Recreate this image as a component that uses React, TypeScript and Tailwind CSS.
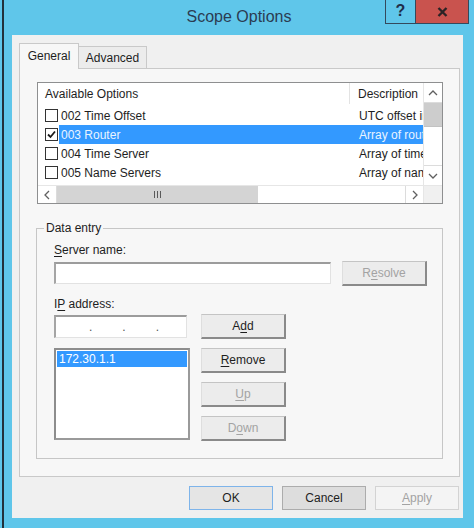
import React from "react";

const Chevron = ({ dir }: { dir: "up" | "down" | "left" | "right" }) => {
  const pts: Record<string, string> = {
    up: "1,6 5,2 9,6",
    down: "1,2 5,6 9,2",
    left: "6,1 2,5 6,9",
    right: "2,1 6,5 2,9",
  };
  const vertical = dir === "up" || dir === "down";
  return (
    <svg width={vertical ? 10 : 8} height={vertical ? 8 : 10} viewBox={vertical ? "0 0 10 8" : "0 0 8 10"}>
      <polyline points={pts[dir]} fill="none" stroke="#606060" strokeWidth="1.3" />
    </svg>
  );
};

const CheckBox = ({ checked }: { checked?: boolean }) => (
  <div className="w-[13px] h-[13px] border border-[#333333] bg-white flex items-center justify-center shrink-0">
    {checked && (
      <svg width="9" height="9" viewBox="0 0 9 9">
        <polyline points="1,4.5 3.5,7 8,1.5" fill="none" stroke="#1a1a1a" strokeWidth="1.8" />
      </svg>
    )}
  </div>
);

type Row = { code: string; desc: string; checked?: boolean; selected?: boolean };

const rows: Row[] = [
  { code: "002 Time Offset", desc: "UTC offset in seconds" },
  { code: "003 Router", desc: "Array of router addresses", checked: true, selected: true },
  { code: "004 Time Server", desc: "Array of time server addresses" },
  { code: "005 Name Servers", desc: "Array of name servers" },
];

const ClassicButton = ({
  children,
  disabled,
  className = "",
}: {
  children: React.ReactNode;
  disabled?: boolean;
  className?: string;
}) => (
  <div
    className={`w-[85px] h-[25px] flex items-center justify-center bg-[#ececec] border border-t-[#c4c4c4] border-l-[#dedede] border-r-2 border-b-2 border-r-[#8a8a8a] border-b-[#8a8a8a] ${
      disabled ? "text-[#a3a3a3]" : "text-[#1e1e1e]"
    } ${className}`}
  >
    {children}
  </div>
);

const Key = ({ children }: { children: React.ReactNode }) => (
  <span className="underline underline-offset-[2px] decoration-1">{children}</span>
);

export default function App() {
  return (
    <div className="w-[474px] h-[528px] flex bg-[#5fc6ea] overflow-hidden font-['Liberation_Sans',Arial,sans-serif] text-[12px] leading-[14px] text-[#1e1e1e]">
      <div className="w-[2px] shrink-0" />
      <div className="w-[2px] shrink-0 bg-[#23313b]" />

      {/* window frame */}
      <div className="flex-1 flex flex-col">
        {/* title bar */}
        <div className="relative h-[35px] shrink-0 flex items-center justify-center">
          <span className="text-[16px] leading-[18px] text-[#2b3c52] -mt-px">Scope Options</span>
          <div className="absolute top-0 right-[5px] flex">
            <div className="w-[31px] h-[24px] border border-t-0 border-[#34495c] flex items-center justify-center">
              <span className="text-[16px] font-bold text-[#1f2e4a] -mt-[2px]">?</span>
            </div>
            <div className="w-[53px] h-[24px] border border-l-0 border-t-0 border-[#34495c] bg-[#c9534e] flex items-center justify-center">
              <svg width="11" height="10" viewBox="0 0 11 10">
                <path d="M1.5 1 L9.5 9 M9.5 1 L1.5 9" stroke="#2c2325" strokeWidth="2.4" />
              </svg>
            </div>
          </div>
        </div>

        {/* client area */}
        <div className="ml-[8px] mr-[11px] mb-[10px] flex-1 bg-[#f0f0f0] flex flex-col pt-[8px] pl-[7px] pr-[3px]">
          {/* tabs */}
          <div className="flex items-end h-[25px] relative z-10">
            <div className="w-[60px] h-[26px] -mb-px bg-[#f7f7f7] border border-b-0 border-[#c9c9c9] flex items-center justify-center pb-[1px]">
              General
            </div>
            <div className="w-[68px] h-[22px] bg-[#ececec] border border-l-0 border-b-0 border-[#c9c9c9] flex items-center justify-center">
              Advanced
            </div>
          </div>

          {/* tab page */}
          <div className="h-[409px] border border-[#c9c9c9] bg-[#f7f7f7] flex flex-col pt-[13px]">
            {/* options list view */}
            <div className="ml-[17px] w-[406px] h-[122px] border border-[#8e8f90] bg-white flex flex-col">
              <div className="flex h-[102px]">
                <div className="w-[385px] flex flex-col">
                  <div className="h-[21px] flex items-center bg-white">
                    <div className="w-[312px] h-full flex items-center pl-[7px] border-r border-[#e3e3e3]">
                      Available Options
                    </div>
                    <div className="flex-1 h-full flex items-center pl-[8px] overflow-hidden whitespace-nowrap">
                      Description
                    </div>
                  </div>
                  <div className="pt-[2px] flex flex-col">
                    {rows.map((r) => (
                      <div key={r.code} className="h-[19px] flex items-center">
                        <div className="pl-[7px] w-[20px] shrink-0">
                          <CheckBox checked={r.checked} />
                        </div>
                        <div
                          className={`ml-[1px] h-full flex-1 flex items-center ${
                            r.selected ? "bg-[#3399ff] text-[#eaf4ff]" : ""
                          }`}
                        >
                          <div className="w-[291px] pl-[2px] whitespace-nowrap">{r.code}</div>
                          <div className="w-[73px] pl-[9px] whitespace-nowrap overflow-hidden">{r.desc}</div>
                        </div>
                      </div>
                    ))}
                  </div>
                </div>
                {/* vertical scrollbar */}
                <div className="w-[19px] flex flex-col border-l border-[#e6e6e6] bg-white">
                  <div className="h-[20px] border-b border-[#dcdcdc] flex items-center justify-center">
                    <Chevron dir="up" />
                  </div>
                  <div className="h-[24px] bg-[#cdcdcd] border-b border-[#c2c2c2]" />
                  <div className="flex-1" />
                  <div className="h-[20px] border-t border-[#dcdcdc] flex items-center justify-center">
                    <Chevron dir="down" />
                  </div>
                </div>
              </div>
              {/* horizontal scrollbar */}
              <div className="flex h-[18px] border-t border-[#e6e6e6]">
                <div className="w-[19px] flex items-center justify-center border-r border-[#dcdcdc]">
                  <Chevron dir="left" />
                </div>
                <div className="w-[201px] bg-[#d4d4d4] flex items-center justify-center gap-[2px]">
                  <div className="w-px h-[7px] bg-[#5a5a5a]" />
                  <div className="w-px h-[7px] bg-[#5a5a5a]" />
                  <div className="w-px h-[7px] bg-[#5a5a5a]" />
                </div>
                <div className="w-[147px] bg-white" />
                <div className="w-[18px] flex items-center justify-center border-l border-[#dcdcdc]">
                  <Chevron dir="right" />
                </div>
                <div className="flex-1 bg-[#f0f0f0] border-l border-[#e6e6e6]" />
              </div>
            </div>

            {/* data entry group */}
            <fieldset className="ml-[16px] mt-[17px] w-[407px] border border-[#c6c6c6] pl-[17px] pb-[17px]">
              <legend className="-ml-[10px] px-[2px] leading-[14px]">Data entry</legend>

              <div className="mt-[8px] h-[14px]">
                <Key>S</Key>erver name:
              </div>
              <div className="mt-[4px] flex">
                <div className="mt-[1px] w-[277px] h-[22px] bg-white border border-t-2 border-l-2 border-t-[#9c9c9c] border-l-[#a5a5a5] border-r-[#e2e2e2] border-b-[#e2e2e2]" />
                <ClassicButton disabled className="ml-[11px]">
                  R<Key>e</Key>solve
                </ClassicButton>
              </div>

              <div className="mt-[11px] h-[14px]">
                I<Key>P</Key> address:
              </div>
              <div className="mt-[3px] flex">
                <div className="w-[136px] flex flex-col">
                  <div className="mt-[1px] w-[133px] h-[23px] bg-white border border-t-2 border-l-2 border-t-[#9c9c9c] border-l-[#a5a5a5] border-r-[#e2e2e2] border-b-[#e2e2e2] flex items-end pb-[3px] text-[#555555]">
                    <span className="ml-[33px]">.</span>
                    <span className="ml-[30px]">.</span>
                    <span className="ml-[30px]">.</span>
                  </div>
                  <div className="mt-[10px] w-[136px] h-[92px] bg-white border-2 border-t-[#8d8d8d] border-l-[#8d8d8d] border-r-[#9a9a9a] border-b-[#9a9a9a] p-px">
                    <div className="h-[16px] bg-[#3399ff] text-white flex items-center pl-[2px]">172.30.1.1</div>
                  </div>
                </div>
                <div className="ml-[11px] flex flex-col gap-[9px]">
                  <ClassicButton>
                    A<Key>d</Key>d
                  </ClassicButton>
                  <ClassicButton>
                    <Key>R</Key>emove
                  </ClassicButton>
                  <ClassicButton disabled>
                    <Key>U</Key>p
                  </ClassicButton>
                  <ClassicButton disabled>
                    D<Key>o</Key>wn
                  </ClassicButton>
                </div>
              </div>
            </fieldset>
          </div>

          {/* dialog buttons */}
          <div className="mt-[9px] flex justify-end gap-[9px] pr-px">
            <div className="w-[84px] h-[24px] bg-[#e5e5e5] border border-[#7eb4ea] flex items-center justify-center">
              OK
            </div>
            <div className="w-[84px] h-[24px] bg-[#dddddd] border border-[#acacac] flex items-center justify-center">
              Cancel
            </div>
            <div className="w-[84px] h-[24px] bg-[#f4f4f4] border border-[#d3d3d3] text-[#a3a3a3] flex items-center justify-center">
              <Key>A</Key>pply
            </div>
          </div>
        </div>
      </div>
    </div>
  );
}
